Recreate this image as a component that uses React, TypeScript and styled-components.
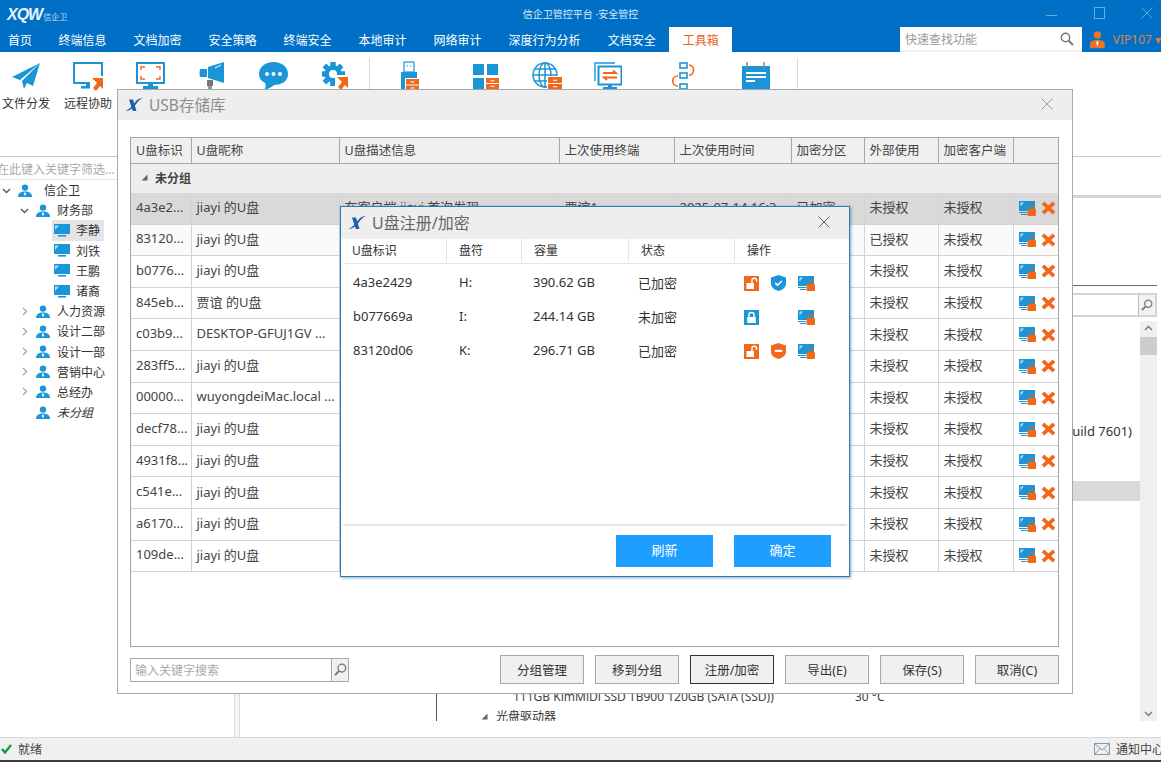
import React from 'react';
import styled, { createGlobalStyle } from 'styled-components';

const BLUE = '#1a96d8';
const ORANGE = '#f0681a';

const GlobalStyle = createGlobalStyle`
  html, body {
    margin: 0;
    padding: 0;
    background: #fff;
    overflow: hidden;
  }
  body {
    font-family: "Noto Sans", "Noto Sans CJK SC", "Liberation Sans", sans-serif;
    font-size: 12px;
    color: #333;
  }
  * { box-sizing: border-box; }
`;

const Shell = styled.div`
  position: relative;
  width: 1161px;
  height: 762px;
  display: flex;
  flex-direction: column;
  overflow: hidden;
  background: #fff;
`;

/* top window bar */
const TitleBar = styled.div`
  height: 26px;
  background: #0070c6;
  display: grid;
  grid-template-columns: 1fr auto 1fr;
  align-items: center;
  color: #fff;
`;

const Brand = styled.div`
  display: flex;
  align-items: baseline;
  padding: 3px 0 0 7px;
  color: #e8f3fb;
`;

const BrandMark = styled.span`
  font-family: "Liberation Sans", sans-serif;
  font-size: 16px;
  font-style: italic;
  font-weight: 700;
  letter-spacing: -1px;
`;

const BrandName = styled.span`
  font-size: 8px;
  margin-left: 1px;
  opacity: 0.8;
`;

const WindowTitle = styled.div`
  font-size: 10px;
  color: #d8ebf8;
`;

const WindowControls = styled.div`
  display: flex;
  justify-content: flex-end;
  align-items: center;
  margin-right: -10px;
`;

const WindowButton = styled.div`
  width: 48px;
  display: flex;
  justify-content: center;
`;

/* tab strip */
const NavBar = styled.div`
  height: 26px;
  background: #0070c6;
  display: flex;
  align-items: flex-end;
`;

const Tab = styled.div<{ $active?: boolean }>`
  height: 25px;
  padding: 0 13.5px;
  display: flex;
  align-items: center;
  color: ${(p) => (p.$active ? '#e8641b' : '#fff')};
  background: ${(p) => (p.$active ? '#fff' : 'transparent')};
  &:first-child { padding: 0 13px 0 8px; }
`;

const QuickFind = styled.div`
  margin-left: auto;
  width: 182px;
  height: 25px;
  background: #fff;
  border-bottom: 2px solid #f2f2f2;
  display: flex;
  align-items: center;
  justify-content: space-between;
  padding: 0 8px 0 5px;
  color: #999;
`;

const VipBlock = styled.div`
  width: 79px;
  height: 25px;
  display: flex;
  align-items: center;
  gap: 8px;
  padding-left: 8px;
  color: #d9834a;
  white-space: nowrap;
  overflow: hidden;
`;

/* ribbon */
const Toolbar = styled.div`
  height: 105px;
  display: flex;
  border-bottom: 1px solid #c8c8c8;
`;

const ToolGroup = styled.div<{ $offset?: number }>`
  display: flex;
  margin-left: ${(p) => p.$offset ?? 0}px;
`;

const Tool = styled.div<{ $w: number }>`
  width: ${(p) => p.$w}px;
  display: flex;
  flex-direction: column;
  align-items: center;
  padding-top: 8px;
`;

const ToolIcon = styled.div`
  height: 32px;
  display: flex;
  align-items: center;
  justify-content: center;
`;

const ToolLabel = styled.div`
  margin-top: 2px;
  color: #333;
  white-space: nowrap;
`;

const ToolSep = styled.div<{ $left: number }>`
  width: 1px;
  height: 60px;
  margin: 6px 0 0 ${(p) => p.$left}px;
  background: #d8d8d8;
`;

/* main body behind the dialogs */
const Body = styled.div`
  flex: 1;
  display: flex;
  background: #f4f4f4;
`;

const Sidebar = styled.div`
  width: 235px;
  background: #fff;
  border-right: 1px solid #dcdcdc;
`;

const FilterBox = styled.div`
  height: 23px;
  line-height: 25px;
  border-bottom: 1px solid #e2e2e2;
  color: #aaa;
  white-space: nowrap;
  margin-left: -3px;
`;

const TreeRow = styled.div<{ $depth: number }>`
  height: 20.2px;
  display: flex;
  align-items: center;
  padding-left: ${(p) => p.$depth * 18}px;
  white-space: nowrap;
  color: #333;
`;

const Chevron = styled.div`
  width: 13px;
  margin-right: 5px;
  display: flex;
  align-items: center;
  justify-content: center;
`;

const TreeLabel = styled.span<{ $gap: number; $italic?: boolean }>`
  margin-left: ${(p) => p.$gap}px;
  font-style: ${(p) => (p.$italic ? 'italic' : 'normal')};
`;

const LeafRow = styled.div<{ $selected?: boolean }>`
  margin-left: 52px;
  width: 52px;
  height: 20.2px;
  display: flex;
  align-items: center;
  gap: 6px;
  padding-left: 2px;
  background: ${(p) => (p.$selected ? '#e4e4e4' : 'transparent')};
`;

const MainPane = styled.div`
  margin-left: 4px;
  flex: 1;
  background: #fff;
  border-left: 1px solid #dcdcdc;
  display: flex;
  flex-direction: column;
`;

const PaneTabs = styled.div`
  height: 41px;
  flex: none;
  border-bottom: 3px solid #d4d4d4;
`;

const PaneHead = styled.div`
  height: 88px;
  flex: none;
  margin-right: 4px;
  border-bottom: 1px solid #666;
`;

const PaneSearchRow = styled.div`
  height: 35px;
  flex: none;
  padding: 7px 4px 4px 0;
`;

const PaneSearch = styled.div`
  height: 24px;
  border: 2px solid #d4d4d4;
  display: flex;
  justify-content: flex-end;
  align-items: center;
`;

const PaneSearchBtn = styled.div`
  width: 17px;
  height: 100%;
  background: #f2f2f2;
  border-left: 1px solid #bbb;
  display: flex;
  align-items: center;
  justify-content: center;
`;

const PaneContent = styled.div`
  height: 400px;
  flex: none;
  display: flex;
`;

const InfoColumn = styled.div`
  flex: 1;
  padding-left: 196px;
  min-width: 0;
`;

const InfoTree = styled.div`
  height: 100%;
  border-left: 1px solid #555;
  overflow: hidden;
  padding-top: 100px;
  color: #333;
`;

const OsRow = styled.div`
  height: 20px;
  line-height: 20px;
  font-size: 13px;
  text-align: right;
  padding-right: 8px;
  white-space: nowrap;
`;

const SelectedRow = styled.div`
  height: 20px;
  margin-top: 40px;
  background: #d9d9d9;
`;

const DiskRow = styled.div`
  height: 20px;
  margin-top: 185px;
  padding-left: 76px;
  display: flex;
  align-items: center;
  white-space: nowrap;
  color: #444;
`;

const DiskName = styled.span`
  width: 342px;
`;

const DriveRow = styled.div`
  height: 20px;
  padding-left: 44px;
  display: flex;
  align-items: center;
  gap: 8px;
`;

const Scrollbar = styled.div`
  width: 17px;
  margin-right: 4px;
  background: #f0f0f0;
  display: flex;
  flex-direction: column;
  align-items: center;
  justify-content: space-between;
  padding: 4px 0;
`;

const ScrollTop = styled.div`
  width: 100%;
  display: flex;
  flex-direction: column;
  align-items: center;
  gap: 6px;
`;

const ScrollThumb = styled.div`
  width: 100%;
  height: 18px;
  background: #cdcdcd;
`;

/* status bar */
const StatusBar = styled.div`
  height: 25px;
  flex: none;
  background: #f0f0f0;
  border-top: 1px solid #d8d8d8;
  border-bottom: 2px solid #3a3a3a;
  display: flex;
  align-items: center;
  padding-left: 1px;
  gap: 6px;
  color: #444;
`;

const Notice = styled.div`
  margin-left: auto;
  margin-right: -3px;
  display: flex;
  align-items: center;
  gap: 6px;
  white-space: nowrap;
`;

/* USB store dialog */
const UsbDialog = styled.div`
  position: absolute;
  left: 117px;
  top: 89px;
  width: 956px;
  height: 605px;
  background: #fff;
  border: 1px solid #a8a8a8;
  display: flex;
  flex-direction: column;
`;

const DialogHead = styled.div<{ $h: number; $pad: number }>`
  height: ${(p) => p.$h}px;
  flex: none;
  background: #eeeeee;
  display: flex;
  align-items: center;
  padding: 0 ${(p) => p.$pad}px 2px 7px;
  gap: 6px;
`;

const DialogTitle = styled.div<{ $size: number; $color: string }>`
  font-size: ${(p) => p.$size}px;
  color: ${(p) => p.$color};
`;

const CloseBtn = styled.div`
  margin-left: auto;
  display: flex;
`;

const UsbBody = styled.div`
  flex: 1;
  padding: 17px 13px 8px 12px;
  display: flex;
  flex-direction: column;
  min-height: 0;
`;

const UsbTable = styled.div`
  height: 510px;
  flex: none;
  border: 1px solid #a4a4a4;
`;

const GRID = '60.5px 148px 220px 115px 117px 73px 74px 75px 1fr';

const HeadRow = styled.div`
  display: grid;
  grid-template-columns: ${GRID};
  height: 26px;
  background: #f0f0f0;
  border-bottom: 1px solid #a8a8a8;
`;

const HeadCell = styled.div`
  display: flex;
  align-items: center;
  padding: 0 0 2px 5px;
  font-size: 12.5px;
  border-right: 1px solid #a8a8a8;
  color: #444;
  white-space: nowrap;
  &:last-child { border-right: 0; }
`;

const GroupRow = styled.div`
  height: 29px;
  background: #eeeeee;
  display: flex;
  align-items: center;
  padding: 0 0 2px 10px;
  gap: 7px;
  font-weight: 700;
  color: #444;
`;

const DataRow = styled.div<{ $selected?: boolean; $odd?: boolean }>`
  display: grid;
  grid-template-columns: ${GRID};
  height: 31.6px;
  background: ${(p) => (p.$selected ? '#d9d9d9' : p.$odd ? '#fafafa' : '#fff')};
  border-bottom: 1px solid #d2d2d2;
`;

const DataCell = styled.div`
  display: flex;
  align-items: center;
  padding: 0 0 3px 5px;
  font-size: 13px;
  border-right: 1px solid #d4d4d4;
  color: #444;
  white-space: nowrap;
  overflow: hidden;
  &:last-child { border-right: 0; }
`;

const RowActions = styled(DataCell)`
  gap: 5px;
  padding-bottom: 0;
`;

const UsbFooter = styled.div`
  margin-top: 8px;
  display: flex;
  align-items: center;
`;

const SearchField = styled.div`
  width: 219px;
  height: 24px;
  border: 1px solid #a8a8a8;
  display: flex;
  align-items: center;
  color: #aaa;
  padding-left: 4px;
`;

const SearchBtn = styled.div`
  margin-left: auto;
  width: 17px;
  height: 100%;
  background: #f0f0f0;
  border-left: 1px solid #a8a8a8;
  display: flex;
  align-items: center;
  justify-content: center;
`;

const FooterButtons = styled.div`
  margin-left: auto;
  display: flex;
  gap: 11px;
`;

const PlainButton = styled.div<{ $focus?: boolean }>`
  width: 84px;
  height: 29px;
  font-size: 12.5px;
  border: 1px solid ${(p) => (p.$focus ? '#333' : '#a8a8a8')};
  background: #f0f0f0;
  display: flex;
  align-items: center;
  justify-content: center;
  color: #333;
`;

/* register / encrypt dialog */
const RegDialog = styled.div`
  position: absolute;
  left: 222px;
  top: 116px;
  width: 510px;
  height: 371px;
  background: #fff;
  border: 1px solid #1f7fb8;
  box-shadow: 1px 1px 3px rgba(0, 60, 100, 0.45);
  display: flex;
  flex-direction: column;
`;

const REG_GRID = '104px 75px 107px 106px 1fr';

const RegHead = styled.div`
  display: grid;
  grid-template-columns: ${REG_GRID};
  height: 25px;
  flex: none;
  margin: 0 2px;
  border-bottom: 1px solid #e6e6e6;
`;

const RegHeadCell = styled.div`
  display: flex;
  align-items: center;
  padding: 0 0 2px 12px;
  height: 23px;
  border-right: 1px solid #e6e6e6;
  color: #333;
  &:first-child { padding-left: 9px; }
  &:last-child { border-right: 0; }
`;

const RegList = styled.div`
  flex: 1;
  padding-top: 2px;
  margin: 0 2px;
`;

const RegRow = styled.div`
  display: grid;
  grid-template-columns: ${REG_GRID};
  height: 34px;
  align-items: center;
`;

const RegCell = styled.div`
  padding: 0 0 2px 12px;
  font-size: 13px;
  color: #333;
  &:first-child { padding-left: 10px; }
  &:nth-child(3) { padding-left: 11px; }
  &:nth-child(4) { padding-left: 9px; }
`;

const RegActions = styled.div`
  display: grid;
  grid-template-columns: 17px 17px 17px;
  column-gap: 10px;
  padding-left: 9px;
  align-items: center;
`;

const RegFooter = styled.div`
  height: 52px;
  flex: none;
  margin: 0 2px;
  border-top: 2px solid #e4e4e4;
  display: flex;
  justify-content: flex-end;
  gap: 21px;
  padding: 9px 16px 0 0;
`;

const PrimaryButton = styled.div`
  width: 97px;
  height: 32px;
  padding-bottom: 3px;
  font-size: 13px;
  background: #1e9fff;
  color: #fff;
  display: flex;
  align-items: center;
  justify-content: center;
`;

/* drawn icons */
const PaperPlane = () => (
  <svg width="28" height="26" viewBox="0 0 28 26">
    <path d="M28 0 L0 14 L8 17 Z" fill={BLUE} />
    <path d="M28 0 L10 18 L12 26 L15 20 L21 23 Z" fill={BLUE} />
  </svg>
);

const RemoteMonitor = () => (
  <svg width="31" height="29" viewBox="0 0 31 29">
    <rect x="1" y="1" width="28" height="20" fill="none" stroke={BLUE} strokeWidth="2" />
    <rect x="8" y="24" width="14" height="2.5" fill={BLUE} />
    <rect x="13" y="21" width="4" height="4" fill={BLUE} />
    <rect x="17" y="14" width="14" height="15" fill="#fff" />
    <path d="M19 16 H30 V27 L27 24 L23 29 L20 26 L24 21 Z" fill={ORANGE} />
  </svg>
);

const CaptureMonitor = () => (
  <svg width="29" height="28" viewBox="0 0 29 28">
    <rect x="1" y="1" width="27" height="20" fill="none" stroke={BLUE} strokeWidth="2" />
    <rect x="7" y="24" width="15" height="3" fill={BLUE} />
    <rect x="12" y="21" width="5" height="4" fill={BLUE} />
    <path d="M5 8 V5 H9 M20 5 H24 V8 M24 14 V17 H20 M9 17 H5 V14" fill="none" stroke={ORANGE} strokeWidth="1.4" />
  </svg>
);

const Megaphone = () => (
  <svg width="26" height="28" viewBox="0 0 26 28">
    <path d="M9 5 L25 0 V21 L9 16 Z" fill={BLUE} />
    <path d="M1 7 H8 V15 H1 Q0 11 1 7 Z" fill={BLUE} />
    <path d="M16 6 L22 3" stroke="#fff" strokeWidth="1" />
    <rect x="8" y="18" width="6" height="6" fill="#777" />
    <rect x="9" y="24" width="4" height="3" fill="#999" />
  </svg>
);

const ChatBubble = () => (
  <svg width="29" height="28" viewBox="0 0 29 28">
    <path d="M14.5 0 C23 0 29 5 29 12 C29 19 23 23 15 23 C12 26 8 27 5 28 C7 25 7 23 6 21 C2 19 0 16 0 12 C0 5 6 0 14.5 0 Z" fill={BLUE} />
    <circle cx="8" cy="12" r="2" fill="#fff" />
    <circle cx="14.5" cy="12" r="2" fill="#fff" />
    <circle cx="21" cy="12" r="2" fill="#fff" />
  </svg>
);

const GearArrow = () => (
  <svg width="27" height="28" viewBox="0 0 27 28">
    <g transform="translate(11 12)">
      {[0, 45, 90, 135, 180, 225, 270, 315].map((a) => (
        <rect key={a} x="-2.5" y="-12" width="5" height="24" fill={BLUE} transform={`rotate(${a})`} />
      ))}
      <circle r="8.5" fill={BLUE} />
      <circle r="4" fill="#fff" />
    </g>
    <rect x="13" y="13" width="14" height="15" fill="#fff" />
    <path d="M15 15 H26 V26 L23 23 L19 28 L16 25 L20 20 Z" fill={ORANGE} />
  </svg>
);

const Drawer = ({ x, y, w = 14, h = 14 }: { x: number; y: number; w?: number; h?: number }) => (
  <g>
    <rect x={x} y={y} width={w} height={h} fill={ORANGE} />
    <path d={`M${x} ${y + h / 2} h${w}`} stroke="#fff" strokeWidth="1" />
    <path d={`M${x + w / 2 - 2} ${y + h / 4} h4 M${x + w / 2 - 2} ${y + (3 * h) / 4} h4`} stroke="#fff" strokeWidth="1" />
  </g>
);

const UsbStick = () => (
  <svg width="20" height="30" viewBox="0 0 20 30">
    <rect x="5" y="1" width="10" height="10" fill="#fff" stroke={BLUE} strokeWidth="1.2" />
    <path d="M7.5 5 h1.5 M11 5 h1.5" stroke={BLUE} strokeWidth="1" />
    <rect x="2" y="11" width="16" height="19" fill={BLUE} />
    <rect x="6" y="17" width="14" height="13" fill="#fff" />
    <Drawer x={7} y={18} w={13} h={12} />
  </svg>
);

const GridDrawer = () => (
  <svg width="28" height="26" viewBox="0 0 28 26">
    <rect x="1" y="1" width="11" height="11" fill={BLUE} />
    <rect x="15" y="1" width="11" height="11" fill={BLUE} />
    <rect x="1" y="15" width="11" height="11" fill={BLUE} />
    <Drawer x={14} y={15} w={13} h={11} />
  </svg>
);

const GlobeDrawer = () => (
  <svg width="30" height="29" viewBox="0 0 30 29">
    <g fill="none" stroke={BLUE} strokeWidth="1.5">
      <circle cx="13" cy="13" r="12" />
      <ellipse cx="13" cy="13" rx="6" ry="12" />
      <path d="M13 1 V25 M1 13 H25 M3 7 H23 M3 19 H23" />
    </g>
    <rect x="15" y="14" width="15" height="15" fill="#fff" />
    <Drawer x={16} y={15} w={14} h={13} />
  </svg>
);

const SwapMonitor = () => (
  <svg width="28" height="28" viewBox="0 0 28 28">
    <path d="M1 19 V1 H21" fill="none" stroke={BLUE} strokeWidth="1.4" />
    <rect x="4.5" y="4.5" width="23" height="18" fill="#fff" stroke={BLUE} strokeWidth="2" />
    <path d="M9 11 H22 L19 8.5 M23 15.5 H10 L13 18" fill="none" stroke={ORANGE} strokeWidth="1.8" />
    <rect x="14" y="22" width="4" height="3" fill={BLUE} />
    <rect x="9" y="25" width="14" height="2" fill={BLUE} />
  </svg>
);

const FlowSwap = () => (
  <svg width="24" height="28" viewBox="0 0 24 28">
    <g fill="none" stroke={BLUE} strokeWidth="1.6">
      <rect x="9" y="1" width="7" height="5" />
      <rect x="9" y="11" width="7" height="5" />
      <rect x="9" y="22" width="7" height="5" />
    </g>
    <path d="M18 3 C24 3 24 13 18 13 M7 14 C0 14 0 24 7 24" fill="none" stroke={ORANGE} strokeWidth="1.6" />
  </svg>
);

const Notebook = () => (
  <svg width="30" height="28" viewBox="0 0 30 28">
    <rect x="1" y="4" width="28" height="24" fill={BLUE} />
    <path d="M6 0 V7 M23 0 V7" stroke="#888" strokeWidth="1.5" />
    <path d="M5 11 H25 M5 15 H25 M5 19 H14" stroke="#fff" strokeWidth="1.8" />
  </svg>
);

const People = () => (
  <svg width="14" height="13" viewBox="0 0 14 13">
    <circle cx="7" cy="3.6" r="3.2" fill={BLUE} />
    <path d="M0 13 C0 9 3 7.5 7 7.5 C11 7.5 14 9 14 13 Z" fill={BLUE} />
    <path d="M7 8 L5.8 10 L7 12 L8.2 10 Z" fill="#fff" />
  </svg>
);

const LeafMonitor = () => (
  <svg width="16" height="13" viewBox="0 0 16 13">
    <rect x="0" y="0" width="16" height="10" fill={BLUE} />
    <path d="M1 6 L5 1.5 H1 Z" fill="#a8def5" />
    <rect x="4" y="11" width="8" height="1.6" fill={BLUE} />
  </svg>
);

const Chev = ({ open, dark }: { open?: boolean; dark?: boolean }) => (
  <svg width="9" height="9" viewBox="0 0 9 9">
    <path
      d={open ? 'M1 3 L4.5 6.5 L8 3' : 'M3 1 L6.5 4.5 L3 8'}
      fill="none"
      stroke={dark ? '#555' : '#a8a8a8'}
      strokeWidth="1.4"
    />
  </svg>
);

const DriveLock = () => (
  <svg width="17" height="15" viewBox="0 0 17 15">
    <rect x="0" y="0" width="16" height="10" fill={BLUE} />
    <path d="M1.5 5.5 L5 1.5 H1.5 Z" fill="#a8def5" />
    <path d="M0 11.5 H8 M2 13.5 H8" stroke={BLUE} strokeWidth="1" />
    <rect x="8.5" y="8" width="8.5" height="7" rx="1" fill={ORANGE} />
    <path d="M10.5 8 V6.5 C10.5 3.8 15 3.8 15 6.5 V8" fill="none" stroke="#a8734f" strokeWidth="1.3" />
  </svg>
);

const OrangeCross = () => (
  <svg width="15" height="14" viewBox="0 0 15 14">
    <path d="M2 1.8 L13 12.2 M13 1.8 L2 12.2" stroke={ORANGE} strokeWidth="3.8" />
  </svg>
);

const OpenLock = () => (
  <svg width="15" height="15" viewBox="0 0 15 15">
    <rect width="15" height="15" fill={ORANGE} />
    <rect x="2.5" y="7" width="7.5" height="6" fill="#fff" />
    <path d="M8 7 V4 C8 1.6 12.5 1.6 12.5 4 V6" fill="none" stroke="#fff" strokeWidth="1.4" />
  </svg>
);

const ClosedLock = () => (
  <svg width="15" height="15" viewBox="0 0 15 15">
    <rect width="15" height="15" fill={BLUE} />
    <rect x="3.2" y="7" width="8.6" height="6" fill="#fff" />
    <path d="M5 7 V4.5 C5 1.8 10 1.8 10 4.5 V7" fill="none" stroke="#fff" strokeWidth="1.4" />
  </svg>
);

const Shield = ({ color, minus }: { color: string; minus?: boolean }) => (
  <svg width="15" height="16" viewBox="0 0 15 16">
    <path d="M7.5 0 L15 2.5 V9 C15 12.5 11 15 7.5 16 C4 15 0 12.5 0 9 V2.5 Z" fill={color} />
    {minus ? (
      <rect x="3.8" y="6.8" width="7.4" height="2.2" fill="#fff" />
    ) : (
      <path d="M4.2 8 L6.6 10.2 L10.8 6" fill="none" stroke="#fff" strokeWidth="1.6" />
    )}
  </svg>
);

const XLogo = () => (
  <svg width="18" height="13" viewBox="0 0 18 13">
    <path d="M0 13 C5 11.5 8.5 6 11.5 2.5 C13 0.8 15.5 0.3 18 0.3 C15 1.2 13.3 3 11.5 5.5 C8.5 10 5 12.8 0 13 Z" fill="#1d5fa6" />
    <path d="M4 1.5 H8 L11.5 13 H7.8 Z" fill="#1d5fa6" />
  </svg>
);

const Cross = ({ size, color }: { size: number; color: string }) => (
  <svg width={size} height={size} viewBox="0 0 12 12">
    <path d="M0.5 0.5 L11.5 11.5 M11.5 0.5 L0.5 11.5" stroke={color} strokeWidth="0.9" />
  </svg>
);

const Magnifier = ({ size, flip, color }: { size: number; flip?: boolean; color: string }) => (
  <svg width={size} height={size} viewBox="0 0 14 14">
    <g transform={flip ? 'translate(14 0) scale(-1 1)' : undefined}>
      <circle cx="5.5" cy="5.5" r="4.2" fill="none" stroke={color} strokeWidth="1.4" />
      <path d="M8.6 8.6 L13 13" stroke={color} strokeWidth="2" />
    </g>
  </svg>
);

const VipUser = () => (
  <svg width="16" height="19" viewBox="0 0 16 19">
    <circle cx="8" cy="4.5" r="4" fill="#e8742a" />
    <path d="M0 19 V14 C0 11 4 10 8 10 C12 10 16 11 16 14 V19 Z" fill="#e8742a" />
    <path d="M8 10.5 L6.8 13 L8 17 L9.2 13 Z" fill="#fff" />
  </svg>
);

const Triangle = () => (
  <svg width="7" height="7" viewBox="0 0 7 7">
    <path d="M6.5 0.5 V6.5 H0.5 Z" fill="#666" />
  </svg>
);

const tabs = ['首页', '终端信息', '文档加密', '安全策略', '终端安全', '本地审计', '网络审计', '深度行为分析', '文档安全'];

const groups = ['人力资源', '设计二部', '设计一部', '营销中心', '总经办'];

const staff = ['李静', '刘铁', '王鹏', '诸裔'];

const usbRows = [
  ['4a3e2...', 'jiayi 的U盘', '未授权'],
  ['83120...', 'jiayi 的U盘', '已授权'],
  ['b0776...', 'jiayi 的U盘', '未授权'],
  ['845eb...', '贾谊 的U盘', '未授权'],
  ['c03b9...', 'DESKTOP-GFUJ1GV ...', '未授权'],
  ['283ff5...', 'jiayi 的U盘', '未授权'],
  ['00000...', 'wuyongdeiMac.local ...', '未授权'],
  ['decf78...', 'jiayi 的U盘', '未授权'],
  ['4931f8...', 'jiayi 的U盘', '未授权'],
  ['c541e...', 'jiayi 的U盘', '未授权'],
  ['a6170...', 'jiayi 的U盘', '未授权'],
  ['109de...', 'jiayi 的U盘', '未授权'],
];

const regRows = [
  { id: '4a3e2429', drive: 'H:', size: '390.62 GB', state: '已加密', locked: true },
  { id: 'b077669a', drive: 'I:', size: '244.14 GB', state: '未加密', locked: false },
  { id: '83120d06', drive: 'K:', size: '296.71 GB', state: '已加密', locked: true },
];

const App: React.FC = () => {
  return (
    <Shell>
      <GlobalStyle />
      <TitleBar>
        <Brand>
          <BrandMark>XQW</BrandMark>
          <BrandName>信企卫</BrandName>
        </Brand>
        <WindowTitle>信企卫管控平台 ·安全管控</WindowTitle>
        <WindowControls>
          <WindowButton>
            <svg width="11" height="11" viewBox="0 0 11 11">
              <path d="M0 7.5 H11" stroke="#6aaee0" strokeWidth="1" />
            </svg>
          </WindowButton>
          <WindowButton>
            <svg width="11" height="12" viewBox="0 0 11 12">
              <rect x="0.5" y="0.5" width="10" height="11" fill="none" stroke="#6aaee0" />
            </svg>
          </WindowButton>
          <WindowButton>
            <Cross size={12} color="#6aaee0" />
          </WindowButton>
        </WindowControls>
      </TitleBar>

      <NavBar>
        {tabs.map((t) => (
          <Tab key={t}>{t}</Tab>
        ))}
        <Tab $active>工具箱</Tab>
        <QuickFind>
          快速查找功能
          <Magnifier size={14} color="#777" />
        </QuickFind>
        <VipBlock>
          <VipUser />
          VIP107 ▾
        </VipBlock>
      </NavBar>

      <Toolbar>
        <ToolGroup $offset={-5}>
          <Tool $w={62}>
            <ToolIcon>
              <PaperPlane />
            </ToolIcon>
            <ToolLabel>文件分发</ToolLabel>
          </Tool>
          <Tool $w={62}>
            <ToolIcon>
              <RemoteMonitor />
            </ToolIcon>
            <ToolLabel>远程协助</ToolLabel>
          </Tool>
          <Tool $w={62}>
            <ToolIcon>
              <CaptureMonitor />
            </ToolIcon>
          </Tool>
          <Tool $w={62}>
            <ToolIcon>
              <Megaphone />
            </ToolIcon>
          </Tool>
          <Tool $w={61}>
            <ToolIcon>
              <ChatBubble />
            </ToolIcon>
          </Tool>
          <Tool $w={62}>
            <ToolIcon>
              <GearArrow />
            </ToolIcon>
          </Tool>
        </ToolGroup>
        <ToolSep $left={3} />
        <ToolGroup>
          <Tool $w={78}>
            <ToolIcon>
              <UsbStick />
            </ToolIcon>
          </Tool>
          <Tool $w={76}>
            <ToolIcon>
              <GridDrawer />
            </ToolIcon>
          </Tool>
          <Tool $w={46}>
            <ToolIcon>
              <GlobeDrawer />
            </ToolIcon>
          </Tool>
          <Tool $w={76}>
            <ToolIcon>
              <SwapMonitor />
            </ToolIcon>
          </Tool>
          <Tool $w={74}>
            <ToolIcon>
              <FlowSwap />
            </ToolIcon>
          </Tool>
          <Tool $w={72}>
            <ToolIcon>
              <Notebook />
            </ToolIcon>
          </Tool>
        </ToolGroup>
        <ToolSep $left={5} />
      </Toolbar>

      <Body>
        <Sidebar>
          <FilterBox>在此键入关键字筛选...</FilterBox>
          <div>
            <TreeRow $depth={0}>
              <Chevron>
                <Chev open dark />
              </Chevron>
              <People />
              <TreeLabel $gap={12}>信企卫</TreeLabel>
            </TreeRow>
            <TreeRow $depth={1}>
              <Chevron>
                <Chev open dark />
              </Chevron>
              <People />
              <TreeLabel $gap={7}>财务部</TreeLabel>
            </TreeRow>
            {staff.map((name, i) => (
              <LeafRow key={name} $selected={i === 0}>
                <LeafMonitor />
                {name}
              </LeafRow>
            ))}
            {groups.map((g) => (
              <TreeRow key={g} $depth={1}>
                <Chevron>
                  <Chev />
                </Chevron>
                <People />
                <TreeLabel $gap={7}>{g}</TreeLabel>
              </TreeRow>
            ))}
            <TreeRow $depth={1}>
              <Chevron />
              <People />
              <TreeLabel $gap={7} $italic>
                未分组
              </TreeLabel>
            </TreeRow>
          </div>
        </Sidebar>
        <MainPane>
          <PaneTabs />
          <PaneHead />
          <PaneSearchRow>
            <PaneSearch>
              <PaneSearchBtn>
                <Magnifier size={12} flip color="#777" />
              </PaneSearchBtn>
            </PaneSearch>
          </PaneSearchRow>
          <PaneContent>
            <InfoColumn>
              <InfoTree>
                <OsRow>Windows 7 (Build 7601)</OsRow>
                <SelectedRow />
                <DiskRow>
                  <DiskName>111GB KimMiDi SSD TB900 120GB (SATA (SSD))</DiskName>
                  <span>30 °C</span>
                </DiskRow>
                <DriveRow>
                  <Triangle />
                  光盘驱动器
                </DriveRow>
              </InfoTree>
            </InfoColumn>
            <Scrollbar>
              <ScrollTop>
                <svg width="9" height="6" viewBox="0 0 9 6">
                  <path d="M1 5 L4.5 1.5 L8 5" fill="none" stroke="#777" strokeWidth="1.4" />
                </svg>
                <ScrollThumb />
              </ScrollTop>
              <svg width="9" height="6" viewBox="0 0 9 6">
                <path d="M1 1 L4.5 4.5 L8 1" fill="none" stroke="#777" strokeWidth="1.4" />
              </svg>
            </Scrollbar>
          </PaneContent>
        </MainPane>
      </Body>

      <StatusBar>
        <svg width="11" height="10" viewBox="0 0 11 10">
          <path d="M1 5 L4 8.5 L10 1" fill="none" stroke="#1c9a3c" strokeWidth="2.4" />
        </svg>
        就绪
        <Notice>
          <svg width="16" height="12" viewBox="0 0 16 12">
            <rect x="0.5" y="0.5" width="15" height="11" fill="none" stroke="#7f9bb3" />
            <path d="M0.5 0.5 L8 7 L15.5 0.5 M0.5 11.5 L6 5.5 M15.5 11.5 L10 5.5" fill="none" stroke="#7f9bb3" />
          </svg>
          通知中心
        </Notice>
      </StatusBar>

      <UsbDialog>
        <DialogHead $h={30} $pad={19}>
          <XLogo />
          <DialogTitle $size={15.5} $color="#8c8c8c">
            USB存储库
          </DialogTitle>
          <CloseBtn>
            <Cross size={12} color="#999" />
          </CloseBtn>
        </DialogHead>
        <UsbBody>
          <UsbTable>
            <HeadRow>
              {['U盘标识', 'U盘昵称', 'U盘描述信息', '上次使用终端', '上次使用时间', '加密分区', '外部使用', '加密客户端', ''].map((h, i) => (
                <HeadCell key={i}>{h}</HeadCell>
              ))}
            </HeadRow>
            <GroupRow>
              <Triangle />
              未分组
            </GroupRow>
            {usbRows.map((row, i) => (
              <DataRow key={row[0]} $selected={i === 0} $odd={i === 1}>
                <DataCell>{row[0]}</DataCell>
                <DataCell>{row[1]}</DataCell>
                <DataCell>{i === 0 ? '在客户端 jiayi 首次发现' : ''}</DataCell>
                <DataCell>{i === 0 ? '贾谊1' : ''}</DataCell>
                <DataCell>{i === 0 ? '2025-07-14 16:3' : ''}</DataCell>
                <DataCell>{i === 0 ? '已加密' : ''}</DataCell>
                <DataCell>{row[2]}</DataCell>
                <DataCell>未授权</DataCell>
                <RowActions>
                  <DriveLock />
                  <OrangeCross />
                </RowActions>
              </DataRow>
            ))}
          </UsbTable>
          <UsbFooter>
            <SearchField>
              输入关键字搜索
              <SearchBtn>
                <Magnifier size={13} flip color="#777" />
              </SearchBtn>
            </SearchField>
            <FooterButtons>
              <PlainButton>分组管理</PlainButton>
              <PlainButton>移到分组</PlainButton>
              <PlainButton $focus>注册/加密</PlainButton>
              <PlainButton>导出(E)</PlainButton>
              <PlainButton>保存(S)</PlainButton>
              <PlainButton>取消(C)</PlainButton>
            </FooterButtons>
          </UsbFooter>
        </UsbBody>

        <RegDialog>
          <DialogHead $h={32} $pad={19}>
            <XLogo />
            <DialogTitle $size={16} $color="#666">
              U盘注册/加密
            </DialogTitle>
            <CloseBtn>
              <Cross size={12} color="#555" />
            </CloseBtn>
          </DialogHead>
          <RegHead>
            {['U盘标识', '盘符', '容量', '状态', '操作'].map((h) => (
              <RegHeadCell key={h}>{h}</RegHeadCell>
            ))}
          </RegHead>
          <RegList>
            {regRows.map((r) => (
              <RegRow key={r.id}>
                <RegCell>{r.id}</RegCell>
                <RegCell>{r.drive}</RegCell>
                <RegCell>{r.size}</RegCell>
                <RegCell>{r.state}</RegCell>
                <RegActions>
                  {r.locked ? <OpenLock /> : <ClosedLock />}
                  {r.id === '4a3e2429' ? <Shield color={BLUE} /> : r.locked ? <Shield color={ORANGE} minus /> : <span />}
                  <DriveLock />
                </RegActions>
              </RegRow>
            ))}
          </RegList>
          <RegFooter>
            <PrimaryButton>刷新</PrimaryButton>
            <PrimaryButton>确定</PrimaryButton>
          </RegFooter>
        </RegDialog>
      </UsbDialog>
    </Shell>
  );
};

export default App;
